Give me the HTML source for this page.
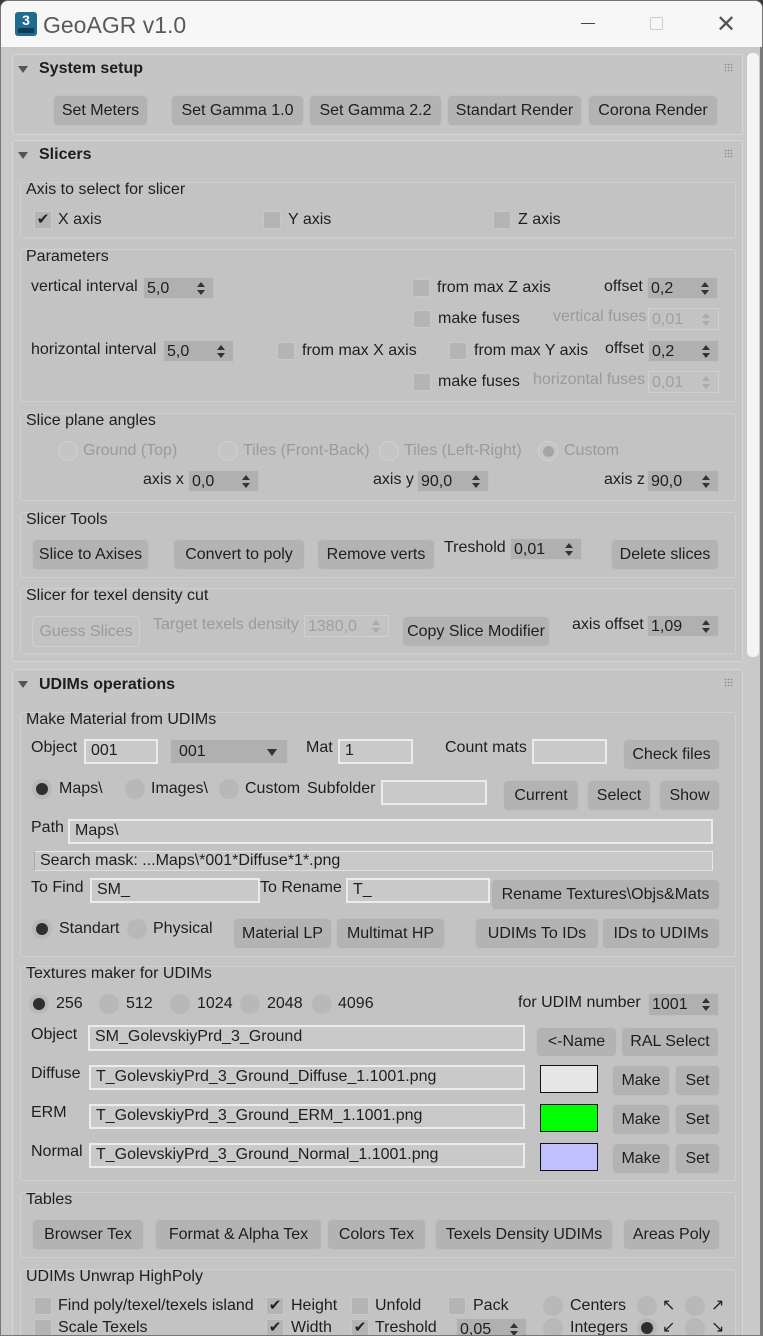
<!DOCTYPE html>
<html><head><meta charset="utf-8"><style>
*{margin:0;padding:0;box-sizing:border-box}
body{width:763px;height:1336px;background:#3a3a3a;position:relative;overflow:hidden;font-family:"Liberation Sans",sans-serif;font-size:16px;color:#1e1e1e}
#win{position:absolute;left:0;top:0;width:763px;height:1336px;background:#c9c9c9;border-radius:8px 8px 0 0;overflow:hidden;border:1px solid #777}
#title{position:absolute;left:0;top:0;width:763px;height:46px;background:#f7f7f7}
div{position:absolute}
.t{white-space:nowrap;line-height:20px;margin-top:-10px}
.d{color:#9a9a9a}
.h{font-weight:bold;font-size:16px}
.p{background:#c5c5c5;border:1px solid #d6d6d6;border-radius:3px}
.g{border:1px solid #d0d0d0;border-radius:3px;background:#c3c3c3}
.b{background:#b3b3b3;border:1px solid #c0c0c0;border-radius:5px;text-align:center;white-space:nowrap;display:flex;align-items:center;justify-content:center}
.bd{background:#c3c3c3;color:#9a9a9a;border:1px solid #cfcfcf}
.f{background:#c9c9c9;border:2px solid #ececec;padding-left:5px;line-height:20px;white-space:nowrap;overflow:hidden}
.s{background:#b0b0b0;padding-left:3px;line-height:21px;border:1px solid #c0c0c0}
.s:after{content:"";position:absolute;right:8px;top:4px;border:4px solid transparent;border-bottom:5px solid #333;border-top:0}
.s:before{content:"";position:absolute;right:8px;top:12px;border:4px solid transparent;border-top:5px solid #333;border-bottom:0}
.sd{background:#c3c3c3;color:#a0a0a0;border:1px solid #d0d0d0}
.sd:after{border-bottom-color:#aaa}.sd:before{border-top-color:#aaa}
.dd{background:#b0b0b0;border:1px solid #c0c0c0;line-height:23px;padding-left:8px}
.c{width:18px;height:18px;background:#b4b4b4;border:1px solid #c8c8c8;margin-top:-9px;font-size:15px;line-height:16px;text-align:center;color:#222}
.r{width:20px;height:20px;border-radius:50%;background:#b8b8b8;margin-top:-10px}
.r.on:after{content:"";position:absolute;left:4px;top:4px;width:12px;height:12px;border-radius:50%;background:#2e2e2e}
.r.dis{background:#c5c5c5;border:1px solid #d0d0d0}
.tri{width:0;height:0;border-left:5px solid transparent;border-right:5px solid transparent;border-top:7px solid #555}
.grip{width:9px;height:9px;background-image:radial-gradient(#888 35%,transparent 40%);background-size:3px 3px}
</style></head><body><div id="win">
<div id="title"></div>
<div style="left:14px;top:11px;width:22px;height:24px;background:#1f6c8e;border-radius:3px;color:#fff;font-weight:bold;font-size:14px;text-align:center;line-height:17px">3<div style="left:3px;top:16px;width:16px;height:5px;background:#0d3c52"></div></div>
<div class="t" style="left:42px;top:24px;font-size:23px;line-height:28px;margin-top:-14px;color:#5a5a5a">GeoAGR v1.0</div>
<div style="left:580px;top:22px;width:14px;height:1px;background:#444"></div>
<div style="left:649px;top:16px;width:13px;height:13px;border:1px solid #ccc;border-radius:2px"></div>
<div class="t" style="left:715px;top:24px;font-size:24px;color:#555">✕</div>
<div style="left:746px;top:52px;width:12px;height:604px;background:#f4f4f4;border-radius:5px"></div>
<div style="left:759px;top:46px;width:4px;height:1290px;background:#7a7a7a"></div>

<div class="p" style="left:11px;top:53px;width:731px;height:81px"></div>
<div class="tri" style="left:17px;top:65px"></div>
<div class="t h" style="left:38px;top:68px">System setup</div>
<div class="grip" style="left:723px;top:62px"></div>
<div class="b" style="left:52px;top:94px;width:95px;height:31px">Set Meters</div>
<div class="b" style="left:170px;top:94px;width:133px;height:31px">Set Gamma 1.0</div>
<div class="b" style="left:308px;top:94px;width:133px;height:31px">Set Gamma 2.2</div>
<div class="b" style="left:446px;top:94px;width:135px;height:31px">Standart Render</div>
<div class="b" style="left:587px;top:94px;width:130px;height:31px">Corona Render</div>

<div class="p" style="left:11px;top:139px;width:731px;height:522px"></div>
<div class="tri" style="left:17px;top:151px"></div>
<div class="t h" style="left:38px;top:154px">Slicers</div>
<div class="grip" style="left:723px;top:148px"></div>

<div class="g" style="left:19px;top:181px;width:716px;height:56px"></div>
<div class="t" style="left:25px;top:189px">Axis to select for slicer</div>
<div class="c" style="left:33px;top:219px">✔</div><div class="t" style="left:57px;top:219px">X axis</div>
<div class="c" style="left:262px;top:219px"></div><div class="t" style="left:287px;top:219px">Y axis</div>
<div class="c" style="left:492px;top:219px"></div><div class="t" style="left:517px;top:219px">Z axis</div>

<div class="g" style="left:19px;top:248px;width:716px;height:153px"></div>
<div class="t" style="left:25px;top:256px">Parameters</div>
<div class="t" style="left:30px;top:286px">vertical interval</div>
<div class="s" style="left:142px;top:276px;width:71px;height:22px">5,0</div>
<div class="c" style="left:411px;top:287px"></div><div class="t" style="left:436px;top:287px">from max Z axis</div>
<div class="t" style="left:603px;top:286px">offset</div>
<div class="s" style="left:646px;top:276px;width:71px;height:22px">0,2</div>
<div class="c" style="left:412px;top:318px"></div><div class="t" style="left:437px;top:318px">make fuses</div>
<div class="t d" style="left:552px;top:316px">vertical fuses</div>
<div class="s sd" style="left:647px;top:307px;width:71px;height:22px">0,01</div>
<div class="t" style="left:30px;top:349px">horizontal interval</div>
<div class="s" style="left:162px;top:339px;width:71px;height:22px">5,0</div>
<div class="c" style="left:276px;top:350px"></div><div class="t" style="left:301px;top:350px">from max X axis</div>
<div class="c" style="left:448px;top:350px"></div><div class="t" style="left:473px;top:350px">from max Y axis</div>
<div class="t" style="left:604px;top:348px">offset</div>
<div class="s" style="left:647px;top:339px;width:71px;height:22px">0,2</div>
<div class="c" style="left:412px;top:381px"></div><div class="t" style="left:437px;top:381px">make fuses</div>
<div class="t d" style="left:532px;top:379px">horizontal fuses</div>
<div class="s sd" style="left:647px;top:370px;width:71px;height:22px">0,01</div>

<div class="g" style="left:19px;top:412px;width:716px;height:88px"></div>
<div class="t" style="left:25px;top:420px">Slice plane angles</div>
<div class="r dis" style="left:57px;top:450px"></div><div class="t d" style="left:82px;top:450px">Ground (Top)</div>
<div class="r dis" style="left:217px;top:450px"></div><div class="t d" style="left:242px;top:450px">Tiles (Front-Back)</div>
<div class="r dis" style="left:378px;top:450px"></div><div class="t d" style="left:403px;top:450px">Tiles (Left-Right)</div>
<div class="r dis" style="left:537px;top:450px"><div style="left:4px;top:4px;width:11px;height:11px;border-radius:50%;background:#a5a5a5"></div></div><div class="t d" style="left:563px;top:450px">Custom</div>
<div class="t" style="left:142px;top:479px">axis x</div>
<div class="s" style="left:187px;top:469px;width:71px;height:22px">0,0</div>
<div class="t" style="left:372px;top:479px">axis y</div>
<div class="s" style="left:416px;top:469px;width:72px;height:22px">90,0</div>
<div class="t" style="left:603px;top:479px">axis z</div>
<div class="s" style="left:646px;top:469px;width:72px;height:22px">90,0</div>

<div class="g" style="left:19px;top:511px;width:716px;height:66px"></div>
<div class="t" style="left:25px;top:519px">Slicer Tools</div>
<div class="b" style="left:31px;top:538px;width:117px;height:31px">Slice to Axises</div>
<div class="b" style="left:172px;top:538px;width:132px;height:31px">Convert to poly</div>
<div class="b" style="left:316px;top:538px;width:118px;height:31px">Remove verts</div>
<div class="t" style="left:443px;top:547px">Treshold</div>
<div class="s" style="left:509px;top:537px;width:72px;height:22px">0,01</div>
<div class="b" style="left:610px;top:538px;width:108px;height:31px">Delete slices</div>

<div class="g" style="left:19px;top:587px;width:716px;height:66px"></div>
<div class="t" style="left:25px;top:595px">Slicer for texel density cut</div>
<div class="b bd" style="left:31px;top:615px;width:108px;height:31px">Guess Slices</div>
<div class="t d" style="left:152px;top:624px">Target texels density</div>
<div class="s sd" style="left:303px;top:614px;width:85px;height:22px">1380,0</div>
<div class="b" style="left:401px;top:615px;width:148px;height:31px">Copy Slice Modifier</div>
<div class="t" style="left:571px;top:624px">axis offset</div>
<div class="s" style="left:646px;top:614px;width:72px;height:22px">1,09</div>

<div class="p" style="left:11px;top:668px;width:731px;height:680px"></div>
<div class="tri" style="left:17px;top:680px"></div>
<div class="t h" style="left:38px;top:684px">UDIMs operations</div>
<div class="grip" style="left:723px;top:677px"></div>

<div class="g" style="left:19px;top:711px;width:716px;height:245px"></div>
<div class="t" style="left:25px;top:719px">Make Material from UDIMs</div>
<div class="t" style="left:30px;top:747px">Object</div>
<div class="f" style="left:83px;top:738px;width:74px;height:25px">001</div>
<div class="dd" style="left:169px;top:738px;width:118px;height:25px">001<div style="left:96px;top:9px;border:5px solid transparent;border-top:7px solid #333;border-bottom:0"></div></div>
<div class="t" style="left:305px;top:747px">Mat</div>
<div class="f" style="left:337px;top:738px;width:75px;height:25px">1</div>
<div class="t" style="left:444px;top:747px">Count mats</div>
<div class="f" style="left:531px;top:738px;width:75px;height:25px"></div>
<div class="b" style="left:622px;top:738px;width:97px;height:31px">Check files</div>
<div class="r on" style="left:31px;top:788px"></div><div class="t" style="left:58px;top:788px">Maps\</div>
<div class="r" style="left:124px;top:788px"></div><div class="t" style="left:150px;top:788px">Images\</div>
<div class="r" style="left:218px;top:788px"></div><div class="t" style="left:244px;top:788px">Custom</div>
<div class="t" style="left:306px;top:788px">Subfolder</div>
<div class="f" style="left:380px;top:779px;width:106px;height:25px"></div>
<div class="b" style="left:502px;top:779px;width:76px;height:31px">Current</div>
<div class="b" style="left:586px;top:779px;width:64px;height:31px">Select</div>
<div class="b" style="left:658px;top:779px;width:61px;height:31px">Show</div>
<div class="t" style="left:30px;top:827px">Path</div>
<div class="f" style="left:67px;top:818px;width:645px;height:25px">Maps\</div>
<div class="f" style="left:33px;top:850px;width:679px;height:20px;line-height:18px;border-width:1px;border-color:#e6e6e6 #e6e6e6 #ddd #aaa">Search mask: ...Maps\*001*Diffuse*1*.png</div>
<div class="t" style="left:30px;top:887px">To Find</div>
<div class="f" style="left:89px;top:877px;width:170px;height:25px">SM_</div>
<div class="t" style="left:259px;top:887px">To Rename</div>
<div class="f" style="left:345px;top:877px;width:144px;height:25px">T_</div>
<div class="b" style="left:490px;top:878px;width:229px;height:31px">Rename Textures\Objs&amp;Mats</div>
<div class="r on" style="left:31px;top:928px"></div><div class="t" style="left:58px;top:928px">Standart</div>
<div class="r" style="left:126px;top:928px"></div><div class="t" style="left:152px;top:928px">Physical</div>
<div class="b" style="left:232px;top:917px;width:99px;height:31px">Material LP</div>
<div class="b" style="left:335px;top:917px;width:109px;height:31px">Multimat HP</div>
<div class="b" style="left:474px;top:917px;width:124px;height:31px">UDIMs To IDs</div>
<div class="b" style="left:601px;top:917px;width:118px;height:31px">IDs to UDIMs</div>

<div class="g" style="left:19px;top:965px;width:716px;height:215px"></div>
<div class="t" style="left:25px;top:973px">Textures maker for UDIMs</div>
<div class="r on" style="left:28px;top:1003px"></div><div class="t" style="left:55px;top:1003px">256</div>
<div class="r" style="left:98px;top:1003px"></div><div class="t" style="left:125px;top:1003px">512</div>
<div class="r" style="left:169px;top:1003px"></div><div class="t" style="left:196px;top:1003px">1024</div>
<div class="r" style="left:239px;top:1003px"></div><div class="t" style="left:266px;top:1003px">2048</div>
<div class="r" style="left:311px;top:1003px"></div><div class="t" style="left:337px;top:1003px">4096</div>
<div class="t" style="left:517px;top:1002px">for UDIM number</div>
<div class="s" style="left:647px;top:992px;width:71px;height:23px">1001</div>
<div class="t" style="left:30px;top:1034px">Object</div>
<div class="f" style="left:87px;top:1024px;width:437px;height:26px">SM_GolevskiyPrd_3_Ground</div>
<div class="b" style="left:535px;top:1026px;width:81px;height:30px">&lt;-Name</div>
<div class="b" style="left:620px;top:1026px;width:98px;height:30px">RAL Select</div>
<div class="t" style="left:30px;top:1073px">Diffuse</div>
<div class="f" style="left:88px;top:1064px;width:436px;height:25px">T_GolevskiyPrd_3_Ground_Diffuse_1.1001.png</div>
<div style="left:539px;top:1064px;width:58px;height:28px;background:#e6e6e6;border:1px solid #111"></div>
<div class="b" style="left:611px;top:1064px;width:58px;height:31px">Make</div>
<div class="b" style="left:674px;top:1064px;width:45px;height:31px">Set</div>
<div class="t" style="left:30px;top:1112px">ERM</div>
<div class="f" style="left:88px;top:1103px;width:436px;height:25px">T_GolevskiyPrd_3_Ground_ERM_1.1001.png</div>
<div style="left:539px;top:1103px;width:58px;height:28px;background:#00ff00;border:1px solid #111"></div>
<div class="b" style="left:611px;top:1103px;width:58px;height:31px">Make</div>
<div class="b" style="left:674px;top:1103px;width:45px;height:31px">Set</div>
<div class="t" style="left:30px;top:1151px">Normal</div>
<div class="f" style="left:88px;top:1142px;width:436px;height:25px">T_GolevskiyPrd_3_Ground_Normal_1.1001.png</div>
<div style="left:539px;top:1142px;width:58px;height:28px;background:#c0c0ff;border:1px solid #111"></div>
<div class="b" style="left:611px;top:1142px;width:58px;height:31px">Make</div>
<div class="b" style="left:674px;top:1142px;width:45px;height:31px">Set</div>

<div class="g" style="left:19px;top:1191px;width:716px;height:66px"></div>
<div class="t" style="left:25px;top:1199px">Tables</div>
<div class="b" style="left:31px;top:1218px;width:112px;height:31px">Browser Tex</div>
<div class="b" style="left:154px;top:1218px;width:167px;height:31px">Format &amp; Alpha Tex</div>
<div class="b" style="left:326px;top:1218px;width:99px;height:31px">Colors Tex</div>
<div class="b" style="left:434px;top:1218px;width:178px;height:31px">Texels Density UDIMs</div>
<div class="b" style="left:622px;top:1218px;width:97px;height:31px">Areas Poly</div>

<div class="g" style="left:19px;top:1268px;width:716px;height:80px"></div>
<div class="t" style="left:25px;top:1276px">UDIMs Unwrap HighPoly</div>
<div class="c" style="left:33px;top:1305px"></div><div class="t" style="left:57px;top:1305px">Find poly/texel/texels island</div>
<div class="c" style="left:265px;top:1305px">✔</div><div class="t" style="left:290px;top:1305px">Height</div>
<div class="c" style="left:350px;top:1305px"></div><div class="t" style="left:374px;top:1305px">Unfold</div>
<div class="c" style="left:447px;top:1305px"></div><div class="t" style="left:472px;top:1305px">Pack</div>
<div class="r" style="left:542px;top:1305px"></div><div class="t" style="left:569px;top:1305px">Centers</div>
<div class="r" style="left:636px;top:1305px"></div><div class="t" style="left:661px;top:1305px">↖</div>
<div class="r" style="left:684px;top:1305px"></div><div class="t" style="left:710px;top:1305px">↗</div>
<div class="c" style="left:33px;top:1327px"></div><div class="t" style="left:57px;top:1327px">Scale Texels</div>
<div class="c" style="left:265px;top:1327px">✔</div><div class="t" style="left:290px;top:1327px">Width</div>
<div class="c" style="left:350px;top:1327px">✔</div><div class="t" style="left:374px;top:1327px">Treshold</div>
<div class="s" style="left:455px;top:1317px;width:71px;height:22px">0,05</div>
<div class="r" style="left:542px;top:1327px"></div><div class="t" style="left:569px;top:1327px">Integers</div>
<div class="r on" style="left:636px;top:1327px"></div><div class="t" style="left:661px;top:1327px">↙</div>
<div class="r" style="left:684px;top:1327px"></div><div class="t" style="left:710px;top:1327px">↘</div>
</div></body></html>
